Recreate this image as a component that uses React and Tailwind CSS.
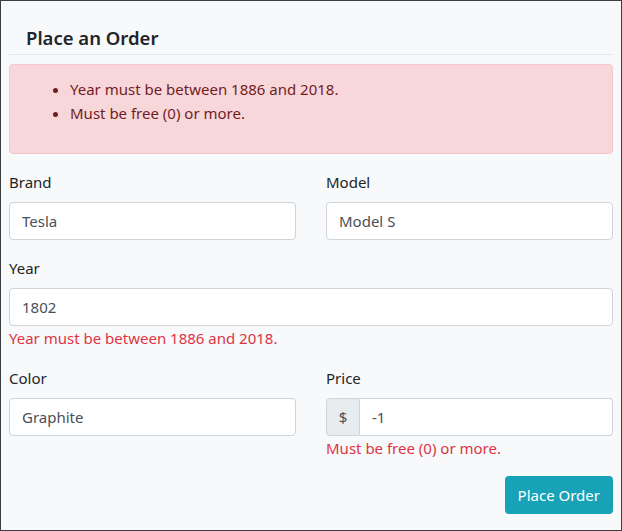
import React from "react";

const Field = ({ label, value, error, className = "" }) => (
  <div className={"mb-4 " + className}>
    <label className="block mb-2 leading-6 text-[#212529]">{label}</label>
    <input
      readOnly
      value={value}
      className="block w-full h-[38px] px-3 bg-white border border-[#ced4da] rounded text-[#495057] outline-none"
    />
    {error && <div className="leading-6 text-[#dc3545]">{error}</div>}
  </div>
);

export default function App() {
  return (
    <div
      className="w-[622px] h-[531px] border border-[#3a3f44] bg-[#f8f9fa] px-2 text-[15px]"
      style={{ fontFamily: '"Noto Sans", "Open Sans", sans-serif' }}
    >
      <div className="pt-[25px] pb-1 pl-[17px] border-b border-[#e3e6e9]">
        <h5 className="text-[18.5px] leading-6 font-semibold text-[#212529]">Place an Order</h5>
      </div>

      <div className="mt-[9px] mb-4 px-5 pt-3 pb-3 bg-[#f8d7da] border border-[#f5c6cb] rounded text-[#721c24]">
        <ul className="list-disc pl-10 mb-4 leading-6">
          <li>Year must be between 1886 and 2018.</li>
          <li>Must be free (0) or more.</li>
        </ul>
      </div>

      <div className="grid grid-cols-2 gap-x-[30px]">
        <Field label="Brand" value="Tesla" />
        <Field label="Model" value="Model S" />
      </div>

      <Field label="Year" value="1802" error="Year must be between 1886 and 2018." />

      <div className="grid grid-cols-2 gap-x-[30px]">
        <Field label="Color" value="Graphite" />
        <div className="mb-4">
          <label className="block mb-2 leading-6 text-[#212529]">Price</label>
          <div className="flex h-[38px]">
            <span className="flex items-center justify-center w-[34px] bg-[#e9ecef] border border-[#ced4da] rounded-l text-[#495057]">
              $
            </span>
            <input
              readOnly
              value="-1"
              className="flex-1 min-w-0 px-3 bg-white border border-l-0 border-[#ced4da] rounded-r text-[#495057] outline-none"
            />
          </div>
          <div className="leading-6 text-[#dc3545]">Must be free (0) or more.</div>
        </div>
      </div>

      <div className="flex justify-end">
        <button className="h-[38px] px-[13px] bg-[#17a2b8] text-white rounded leading-6">Place Order</button>
      </div>
    </div>
  );
}
